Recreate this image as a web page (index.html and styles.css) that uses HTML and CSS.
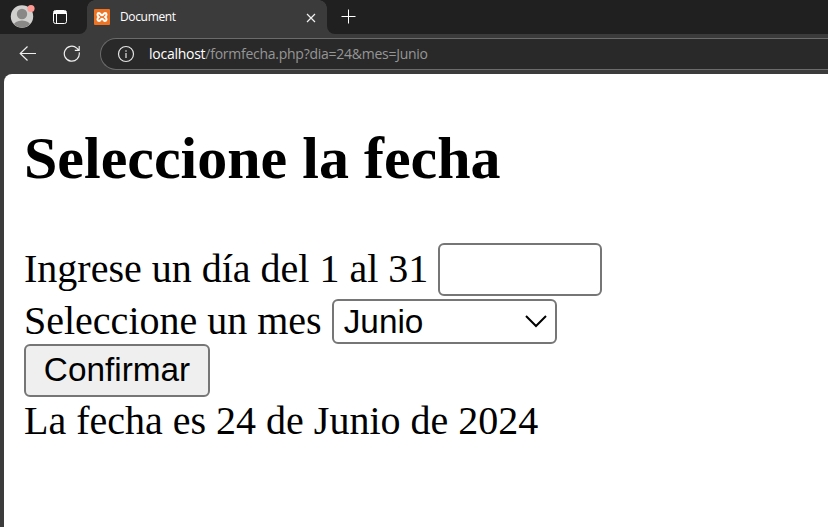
FILE: index.html
```html
<!DOCTYPE html>
<html lang="es">
<head>
<meta charset="utf-8">
<title>Document</title>
<link rel="stylesheet" href="styles.css">
</head>
<body>
<div class="browser">
  <header class="tabs">
    <div class="tools">
      <svg class="avatar" width="26" height="30" viewBox="0 0 26 30">
        <defs><clipPath id="face"><circle cx="12" cy="17.500" r="11"/></clipPath></defs>
        <circle cx="12" cy="17.500" r="11.200" fill="#d2d0ce"/>
        <g clip-path="url(#face)" fill="#8a8886"><circle cx="12" cy="15" r="5.200"/><ellipse cx="12" cy="27" rx="8.500" ry="5.500"/></g>
        <circle cx="21" cy="9.500" r="3.600" fill="#ff9a94"/>
      </svg>
      <svg class="workspaces" width="16" height="16" viewBox="0 0 16 16" fill="none" stroke="#fff">
        <rect x="1.500" y="1.500" width="13" height="13" rx="2"/><path d="M2 3.500h12" stroke-width="3"/><path d="M4.500 4v10"/>
      </svg>
    </div>
    <div class="tab">
      <svg class="favicon" width="16" height="16" viewBox="0 0 16 16">
        <rect width="16" height="16" rx="1" fill="#ee7423"/>
        <path d="M5 4C3 4 3 6.500 4.800 8C3 9.500 3 12 5 12C6.500 12 6.500 9.800 8 9.800C9.500 9.800 9.500 12 11 12C13 12 13 9.500 11.200 8C13 6.500 13 4 11 4C9.500 4 9.500 6.200 8 6.200C6.500 6.200 6.500 4 5 4Z" fill="none" stroke="#fff" stroke-width="2"/>
      </svg>
      <span class="title">Document</span>
      <svg class="close" width="10" height="10" viewBox="0 0 10 10"><path d="M1 1l8 8M9 1L1 9" stroke="#f0f0f0" stroke-width="1.200"/></svg>
    </div>
    <svg class="plus" width="15" height="15" viewBox="0 0 15 15"><path d="M7.500 .5v14M.5 7.500h14" stroke="#fff"/></svg>
  </header>
  <nav class="toolbar">
    <svg class="back" width="18" height="16" viewBox="0 0 18 16" fill="none" stroke="#eee" stroke-width="1.200"><path d="M17 7.500H1.200M8.500 .5L1.200 7.500l7.300 7"/></svg>
    <svg class="reload" width="18" height="18" viewBox="0 0 18 18" fill="none" stroke="#eee" stroke-width="1.200"><path d="M16.200 7.400A7.500 7.500 0 1 1 13.800 3.100L16 5.200M16.200 1v4.400h-4.400"/></svg>
    <div class="address">
      <svg class="info" width="18" height="18" viewBox="0 0 18 18" fill="none" stroke="#e4e4e4" stroke-width="1.200"><circle cx="9" cy="9" r="7.500"/><path d="M9 8v5M9 5.200v1.500"/></svg>
      <span class="url"><span class="host">localhost</span><span class="path">/formfecha.php?dia=24&amp;mes=Junio</span></span>
    </div>
  </nav>
  <main class="page">
    <h2>Seleccione la fecha</h2>
    <form>
      <div class="row day"><label for="dia">Ingrese un día del 1 al 31</label><input id="dia" type="text"></div>
      <div class="row month"><label for="mes">Seleccione un mes</label>
        <div class="picker"><select id="mes"><option>Junio</option></select>
          <svg class="chevron" width="24" height="14" viewBox="0 0 24 14"><path d="M2 2l10 10L22 2" fill="none" stroke="#000" stroke-width="2"/></svg></div>
      </div>
      <button type="button">Confirmar</button>
    </form>
    <p>La fecha es 24 de Junio de 2024</p>
  </main>
</div>
</body>
</html>
```
FILE: styles.css
```css
* { box-sizing: border-box; }
body { margin: 0; background: #3b3b3b; overflow: hidden; }
svg { display: block; flex: none; }
.browser { height: 527px; display: flex; flex-direction: column; }
.tabs { height: 34px; display: flex; background: #3b3b3b; font-family: "Open Sans", sans-serif; }
.tools { width: 87px; height: 34px; padding-left: 10px; display: flex; background: #202020; border-bottom-right-radius: 8px; }
.avatar { margin-top: -1px; }
.workspaces { margin: 9px 0 0 16px; }
.tab { position: relative; width: 240px; height: 34px; padding-left: 7px; display: flex; align-items: center; background: #3b3b3b; border-radius: 8px 8px 0 0; }
.tabs::after { content: ""; order: 1; flex: 1; background: #202020; border-bottom-left-radius: 8px; }
.tab::before { content: ""; position: absolute; z-index: 0; top: 0; left: 0; width: 8px; height: 8px; background: radial-gradient(circle at 8px 8px, #3b3b3b 7.5px, #202020 8px); }
.tab::after { content: ""; position: absolute; top: 0; right: 0; width: 8px; height: 8px; background: radial-gradient(circle at 0 8px, #3b3b3b 7.5px, #202020 8px); }
.title { margin-left: 10px; width: 55px; font-size: 12px; line-height: 18px; letter-spacing: -0.35px; white-space: nowrap; color: #fff; }
.close { margin-left: 131px; margin-top: 1px; }
.plus { order: 2; position: absolute; left: 341px; top: 9px; }
.toolbar { height: 40px; display: flex; align-items: center; }
.back { margin-left: 19px; }
.reload { margin-left: 26px; }
.address { flex: 1; height: 32px; margin-left: 19px; padding-left: 16px; display: flex; align-items: center; background: #292929; border: 1px solid #6b6b6b; border-right: 0; border-radius: 16px 0 0 16px; }
.url { margin-left: 14px; font: 14px/20px "Open Sans", sans-serif; letter-spacing: -0.26px; white-space: nowrap; }
.host { color: #fff; }
.path { color: #969696; }
.page { flex: 1; margin-left: 4px; padding: 50px 20px 0; background: #fff; border-top-left-radius: 8px; font: 40px/46px "Liberation Serif", serif; color: #000; }
h2 { margin: 0 0 51px; font-size: 60px; line-height: 68px; }
.row { display: flex; align-items: center; white-space: nowrap; }
.row label { padding-bottom: 2px; }
.day { height: 53px; margin-bottom: 3px; }
.month { height: 45px; }
input { width: 164px; height: 53px; margin: 0 0 0 10px; border: 2px solid #767676; border-radius: 6px; background: #fff; }
.picker { position: relative; margin-left: 10px; }
select { display: block; width: 225px; height: 45px; padding: 0 10px; appearance: none; border: 2px solid #767676; border-radius: 6px; background: #fff; color: #000; font: 33.333px/38px "Liberation Sans", sans-serif; }
.chevron { position: absolute; right: 9px; top: 15px; }
button { display: block; width: 186px; height: 53px; margin: 0; padding: 0 0 2px; border: 2px solid #767676; border-radius: 6px; background: #efefef; color: #000; font: 33.333px/38px "Liberation Sans", sans-serif; }
p { margin: 1px 0 0; }
```
